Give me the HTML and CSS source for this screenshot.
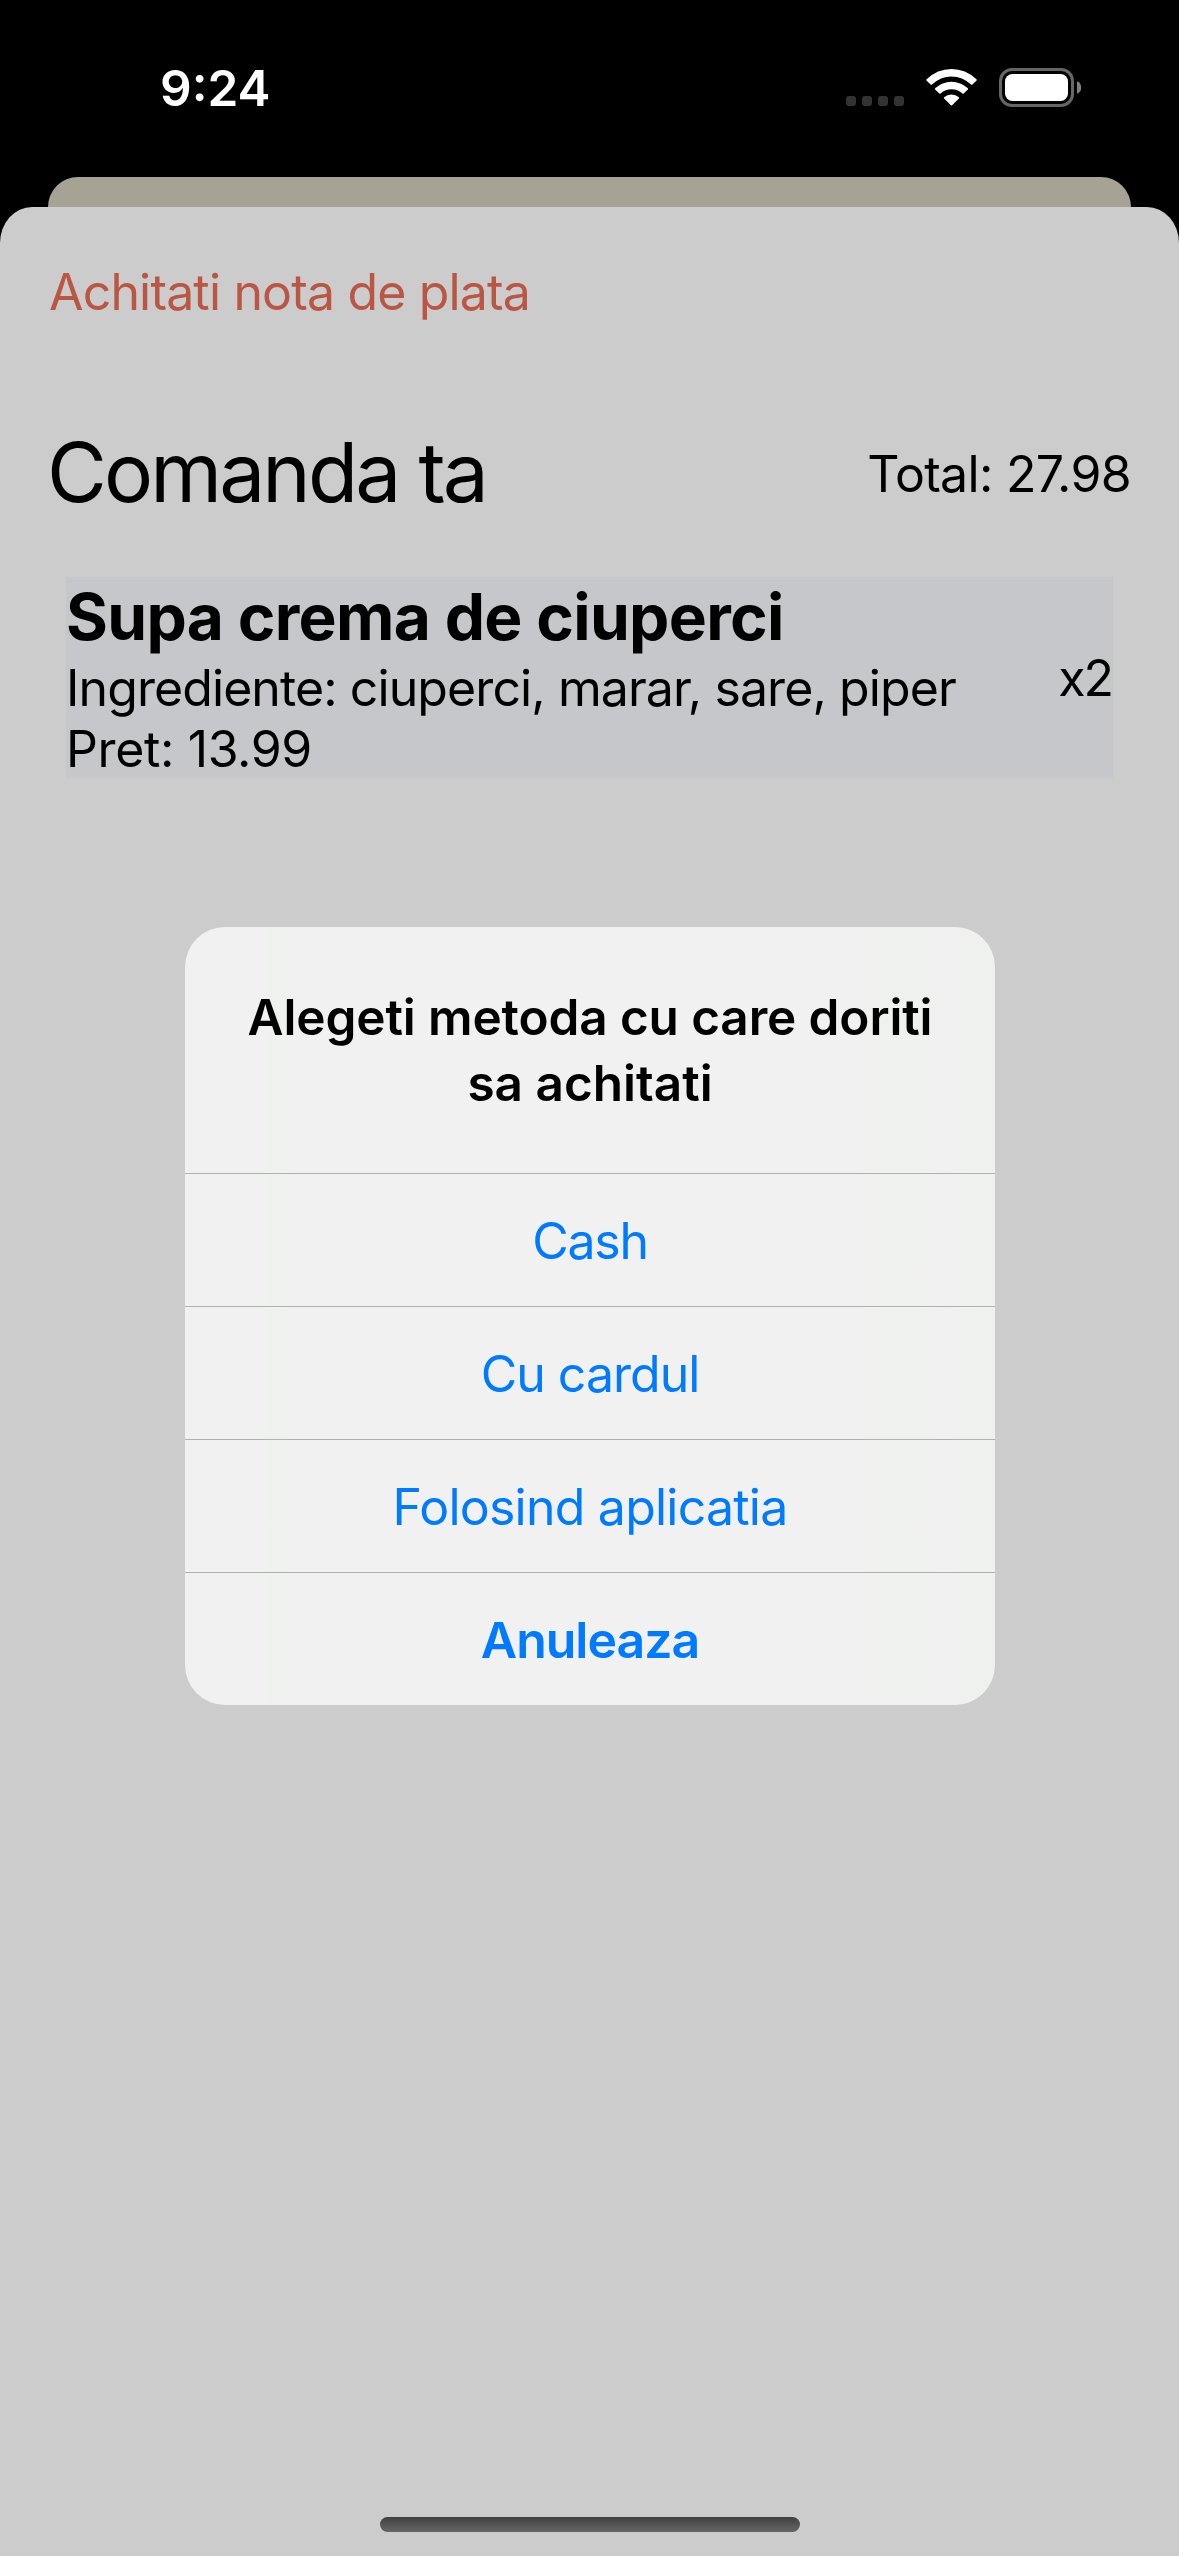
FILE: index.html
```html
<!DOCTYPE html>
<html lang="ro">
<head>
<meta charset="utf-8">
<title>Comanda ta</title>
<link rel="stylesheet" href="styles.css">
</head>
<body>
<div class="screen">
  <header class="status">
    <span class="time">9:24</span>
    <svg class="indicators" width="240" height="41" viewBox="846 67 240 41" aria-hidden="true">
      <g fill="#333">
        <rect x="846" y="96" width="10" height="10" rx="3"/>
        <rect x="862" y="96" width="10" height="10" rx="3"/>
        <rect x="878" y="96" width="10" height="10" rx="3"/>
        <rect x="894" y="96" width="10" height="10" rx="3"/>
      </g>
      <g fill="#fff">
        <path d="M926.3 79.4Q937.500 69 951.500 69T976.700 79.400Q977 80 976.600 80.600L972.400 84.600Q971.600 85 971 84.500Q962.500 76.400 951.500 76.400T932 84.500Q931.400 85 930.600 84.600L926.400 80.600Q926 80 926.300 79.400Z"/>
        <path d="M935.100 88.300Q942.300 81.800 951.500 81.800T967.900 88.300Q968.300 88.900 967.900 89.500L963.700 93.600Q963 94 962.400 93.500Q957.600 89.300 951.500 89.300T940.600 93.500Q940 94 939.300 93.600L935.100 89.500Q934.700 88.900 935.100 88.300Z"/>
        <path d="M944.100 97.200Q947.200 94.600 951.500 94.600T958.900 97.200Q959.500 97.800 958.900 98.400L952.100 105.200Q951.500 105.800 950.900 105.200L944.100 98.400Q943.500 97.800 944.100 97.200Z"/>
      </g>
      <rect x="1000.500" y="69.500" width="72" height="36" rx="11.500" fill="none" stroke="#666" stroke-width="3"/>
      <rect x="1005" y="74" width="63" height="27" rx="7.500" fill="#fff"/>
      <path d="M1077 81.200Q1081.200 83 1081.200 87.500T1077 93.800Z" fill="#808080"/>
    </svg>
  </header>
  <div class="back-sheet"></div>
  <main class="sheet">
    <a class="pay">Achitati nota de plata</a>
    <div class="heading">
      <h1 class="title">Comanda ta</h1>
      <span class="total">Total: 27.98</span>
    </div>
    <section class="item">
      <div class="details">
        <h2 class="name">Supa crema de ciuperci</h2>
        <p class="ingredients">Ingrediente: ciuperci, marar, sare, piper</p>
        <p class="price">Pret: 13.99</p>
      </div>
      <span class="count">x2</span>
    </section>
    <div class="home-bar"></div>
  </main>
  <div class="alert" role="dialog">
    <div class="message">
      <span class="line-one">Alegeti metoda cu care doriti</span><br>
      <span class="line-two">sa achitati</span>
    </div>
    <button class="action cash">Cash</button>
    <button class="action card">Cu cardul</button>
    <button class="action app">Folosind aplicatia</button>
    <button class="action cancel">Anuleaza</button>
  </div>
</div>
</body>
</html>
```
FILE: styles.css
```css
* { box-sizing: border-box; margin: 0; padding: 0; }
body { background: #000; }

.screen {
  position: relative;
  display: flex;
  flex-direction: column;
  width: 1179px;
  height: 2556px;
  background: #000;
  color: #000;
  font: 400 50px/61px Inter, "Liberation Sans", sans-serif;
  overflow: hidden;
  white-space: nowrap;
}

.status {
  display: flex;
  justify-content: space-between;
  align-items: flex-start;
  height: 177px;
  padding: 57px 93px 0 160px;
}
.time { color: #fff; font-size: 49.5px; font-weight: 600; line-height: 62px; }
.indicators { display: block; margin-top: 10px; }

.back-sheet {
  height: 30px;
  margin: 0 48px;
  background: #a6a294;
  border-radius: 30px 30px 0 0;
}

.sheet {
  display: flex;
  flex: 1;
  flex-direction: column;
  padding: 54px 0 24px;
  background: #ccc;
  border-radius: 32px 32px 0 0 / 36px 36px 0 0;
}
.pay {
  padding-left: 49px;
  color: #b95644;
  line-height: 62px;
  letter-spacing: -0.84px;
}
.heading {
  display: flex;
  justify-content: space-between;
  align-items: center;
  height: 100px;
  margin-top: 100px;
  padding: 0 48px 0 47px;
}
.title { font-size: 82px; font-weight: 400; line-height: 100px; letter-spacing: -2.9px; }
.total { padding-top: 2px; letter-spacing: -0.7px; }

.item {
  display: flex;
  justify-content: space-between;
  align-items: center;
  height: 201px;
  margin: 54px 66px 0;
  background: #c6c7cb;
}
.name { font-size: 64px; font-weight: 700; line-height: 79px; letter-spacing: -0.67px; }
.ingredients, .price { padding-top: 1px; line-height: 60px; }
.ingredients { padding-top: 2px; letter-spacing: -0.91px; }
.price { letter-spacing: -0.37px; }
.count { padding: 1px 1px 0 0; letter-spacing: -2px; }

.home-bar {
  width: 420px;
  height: 15px;
  margin: auto auto 0;
  border-radius: 8px;
  background: linear-gradient(#404040, #666);
}

.alert {
  position: absolute;
  top: 927px;
  left: 185px;
  width: 810px;
  height: 778px;
  border-radius: 40px;
  background: linear-gradient(90deg, #f1f1f1 0, #f1f1f1 8%, #eff1ef 11%, #f1f1f1 16%, #f1f1f1 80%, #eff1ee 88%, #f0f1f0 94%, #eff1ee 100%);
  overflow: hidden;
}
.message {
  height: 246px;
  padding-top: 57px;
  text-align: center;
  font-size: 49.5px;
  font-weight: 600;
  line-height: 66px;
}
.line-one { letter-spacing: -0.12px; }
.action {
  display: block;
  width: 100%;
  height: 133px;
  padding-top: 2px;
  border: 0;
  border-top: 1px solid #b0b2b0;
  background: none;
  color: #007aff;
  font: inherit;
}
.cash { letter-spacing: -1.3px; }
.card { letter-spacing: -0.98px; }
.app { letter-spacing: -0.77px; }
.cancel { font-weight: 600; letter-spacing: -1px; }
```
